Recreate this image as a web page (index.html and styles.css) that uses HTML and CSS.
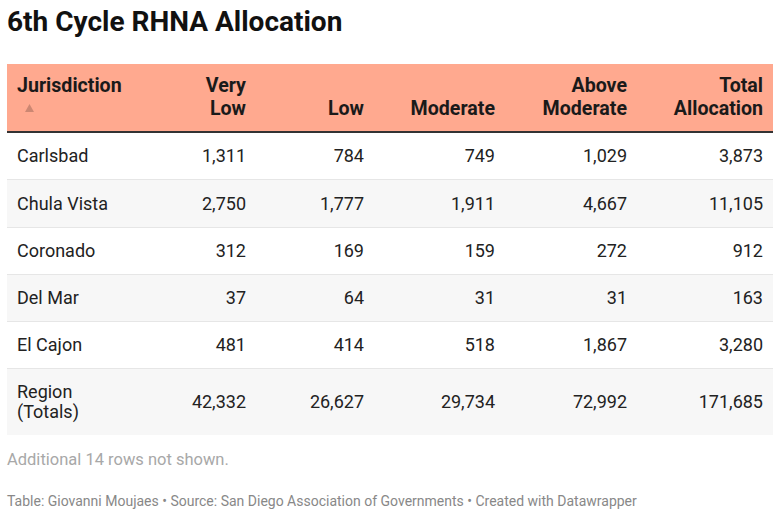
FILE: index.html
```html
<!DOCTYPE html>
<html>
<head>
<meta charset="utf-8">
<link rel="stylesheet" href="styles.css">
</head>
<body>
<div class="chart">
  <h1 class="title">6th Cycle RHNA Allocation</h1>
  <table class="tbl">
    <thead>
      <tr>
        <th class="c-name"><span class="hd">Jurisdiction</span><svg class="sort" width="9" height="8" viewBox="0 0 9 8"><path d="M4.5 0 L9 8 L0 8 Z"/></svg></th>
        <th class="num c1">Very<br>Low</th>
        <th class="num c2">Low</th>
        <th class="num c3">Moderate</th>
        <th class="num c4">Above<br>Moderate</th>
        <th class="num c5">Total<br>Allocation</th>
      </tr>
    </thead>
    <tbody>
      <tr><td>Carlsbad</td><td class="num">1,311</td><td class="num">784</td><td class="num">749</td><td class="num">1,029</td><td class="num">3,873</td></tr>
      <tr class="tall"><td>Chula Vista</td><td class="num">2,750</td><td class="num">1,777</td><td class="num">1,911</td><td class="num">4,667</td><td class="num">11,105</td></tr>
      <tr><td>Coronado</td><td class="num">312</td><td class="num">169</td><td class="num">159</td><td class="num">272</td><td class="num">912</td></tr>
      <tr><td>Del Mar</td><td class="num">37</td><td class="num">64</td><td class="num">31</td><td class="num">31</td><td class="num">163</td></tr>
      <tr><td>El Cajon</td><td class="num">481</td><td class="num">414</td><td class="num">518</td><td class="num">1,867</td><td class="num">3,280</td></tr>
      <tr class="total"><td>Region<br>(Totals)</td><td class="num">42,332</td><td class="num">26,627</td><td class="num">29,734</td><td class="num">72,992</td><td class="num">171,685</td></tr>
    </tbody>
  </table>
  <p class="more">Additional 14 rows not shown.</p>
  <p class="credit">Table: Giovanni Moujaes • Source: San Diego Association of Governments • Created with Datawrapper</p>
</div>
</body>
</html>
```
FILE: styles.css
```css
html, body {
  margin: 0;
  padding: 0;
  background: #fff;
}
body {
  font-family: Roboto, "Liberation Sans", sans-serif;
  color: #1d1d1d;
}
.chart {
  padding: 0 7px;
}
.title {
  margin: 0;
  padding-top: 5px;
  font-size: 28px;
  line-height: 34px;
  font-weight: 700;
  color: #111;
  height: 59px;
}
.tbl {
  width: 766px;
  border-collapse: collapse;
  font-size: 18px;
  table-layout: fixed;
}
.tbl th {
  background: #ffa98f;
  font-weight: 700;
  font-size: 19.6px;
  line-height: 23px;
  vertical-align: bottom;
  padding: 10px 10px 11px 10px;
  border-bottom: 2px solid #333;
  color: #1a1a1a;
}
.tbl th.c-name {
  text-align: left;
  vertical-align: top;
  width: 123px;
}
.tbl .hd { display: block; }
.tbl .sort {
  display: block;
  margin: 7px 0 0 8px;
  fill: rgba(0,0,0,0.2);
}
.num { text-align: right; }
.tbl th.c1 { width: 86px; }
.tbl th.c2 { width: 98px; }
.tbl th.c3 { width: 111px; }
.tbl th.c4 { width: 112px; }
.tbl th.c5 { width: 116px; }
.tbl td {
  padding: 0 10px;
  height: 46px;
  border-bottom: 1px solid #e6e6e6;
  line-height: 20px;
  vertical-align: middle;
  color: #222;
}
.tbl tr.tall td {
  height: 47px;
}
.tbl tbody tr:nth-child(even) td {
  background: #f7f7f7;
}
.tbl tr.total td {
  height: 66px;
  border-bottom: none;
}
.more {
  margin: 15px 0 0 0;
  font-size: 16.5px;
  line-height: 20px;
  color: #a8a8a8;
}
.credit {
  margin: 23px 0 0 0;
  font-size: 14px;
  line-height: 17px;
  color: #888;
}
```
